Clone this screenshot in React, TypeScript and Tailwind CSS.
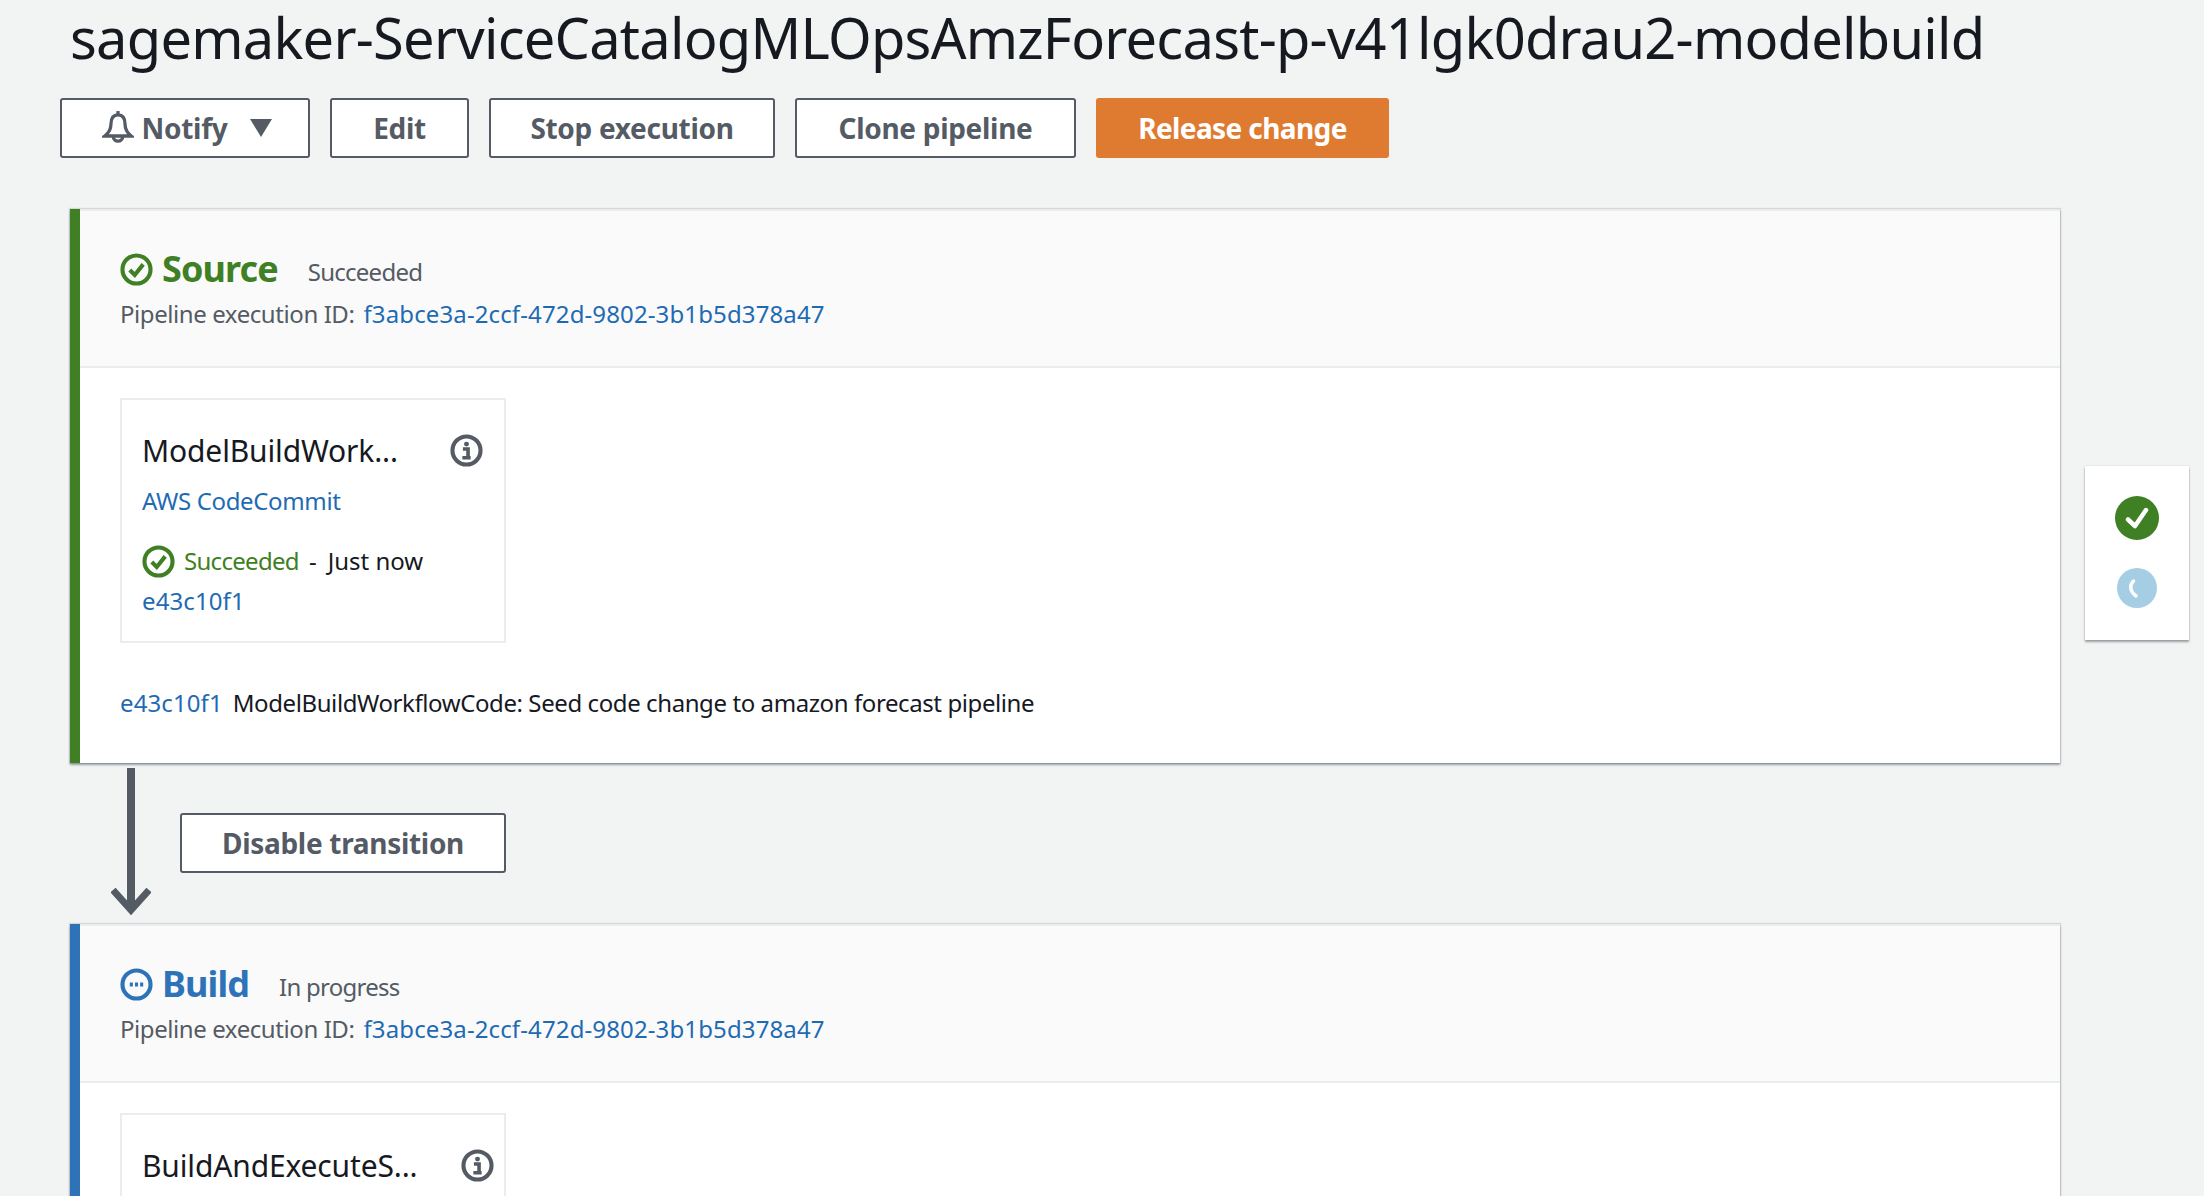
import type { ReactNode } from "react"

const EXEC_ID = "f3abce3a-2ccf-472d-9802-3b1b5d378a47"

function Btn({ children, className = "" }: { children: ReactNode; className?: string }) {
  return (
    <button className={"h-[60px] flex items-center justify-center bg-white border-2 border-[#545b64] rounded-[3px] text-[#545b64] font-bold text-[28px] tracking-[-0.3px] " + className}>
      {children}
    </button>
  )
}

function StatusIcon({ color, size = 33, kind }: { color: string; size?: number; kind: "check" | "dots" }) {
  return (
    <svg width={size} height={size} viewBox="0 0 32 32" fill="none" className="shrink-0">
      <circle cx="16" cy="16" r="13.6" stroke={color} strokeWidth="4" />
      {kind === "check" ? (
        <path d="M9.500 16.500l4.800 4.800L22.500 11" stroke={color} strokeWidth="4" />
      ) : (
        <path d="M9.500 16h3M14.500 16h3M19.500 16h3" stroke={color} strokeWidth="4" />
      )}
    </svg>
  )
}

function InfoIcon() {
  return (
    <svg width="33" height="33" viewBox="0 0 32 32" fill="none" className="shrink-0">
      <circle cx="16" cy="16" r="13.6" stroke="#545b64" strokeWidth="4" />
      <circle cx="16" cy="9.800" r="2.400" fill="#545b64" />
      <path d="M12.500 14.500h5v8M12 23h8" stroke="#545b64" strokeWidth="3.500" />
    </svg>
  )
}

function StageHeader({ name, status, color, kind }: { name: string; status: string; color: string; kind: "check" | "dots" }) {
  return (
    <div className="h-[159px] bg-[#fafafa] border-t-2 border-b-2 border-[#eaeded] pl-10 pt-[34px]">
      <div className="flex items-center h-[48px]">
        <StatusIcon color={color} kind={kind} />
        <span className="ml-[9px] text-[36px] font-bold leading-[48px] tracking-[-0.9px]" style={{ color }}>{name}</span>
        <span className="ml-[30px] text-[24px] text-[#545b64] mt-[5px] tracking-[-0.75px]">{status}</span>
      </div>
      <div className="mt-[3px] text-[24px] leading-[36px] text-[#545b64] flex">
        <span className="tracking-[-0.42px]">Pipeline execution ID:</span>
        <span className="ml-[9px] text-[#1f6bb3] tracking-[0.12px]">{EXEC_ID}</span>
      </div>
    </div>
  )
}

export default function App() {
  return (
    <div className="w-[2204px] h-[1196px] overflow-hidden bg-[#f2f3f3] font-['Noto_Sans','Open_Sans',sans-serif]">
      <h1 className="pl-[70px] pt-[1px] h-[98px] text-[56px] leading-[72px] text-[#16191f] tracking-[-0.76px]">
        sagemaker-ServiceCatalogMLOpsAmzForecast-p-v41lgk0drau2-modelbuild
      </h1>

      <div className="flex gap-5 pl-[60px]">
        <Btn className="w-[250px] pl-[4px]">
          <svg width="32" height="34" viewBox="0 0 34 36" fill="none" className="mr-[8px]">
            <path d="M17 4c-5 0-7.500 4-7.500 10 0 6-2 9-6.500 12.500h28C26.500 23 24.500 20 24.500 14c0-6-2.500-10-7.500-10z" stroke="#545b64" strokeWidth="3.500" />
            <path d="M17 0v4" stroke="#545b64" strokeWidth="3.500" />
            <path d="M12 27a5 5 0 0 0 10 0" stroke="#545b64" strokeWidth="3.500" />
          </svg>
          <span>Notify</span>
          <svg width="22" height="18" viewBox="0 0 22 18" className="ml-[23px]">
            <path d="M0 0h22L11 18z" fill="#545b64" />
          </svg>
        </Btn>
        <Btn className="w-[139px]">Edit</Btn>
        <Btn className="w-[286px]">Stop execution</Btn>
        <Btn className="w-[281px]">Clone pipeline</Btn>
        <button className="w-[293px] h-[60px] bg-[#df7b30] rounded-[3px] text-white font-bold text-[28px] tracking-[-0.6px]">Release change</button>
      </div>

      <div className="flex mt-[51px] pl-[70px]">
        <div className="w-[1990px]">
          <section className="h-[554px] bg-white border-l-[10px] border-[#3f8024] shadow-[0_2px_2px_0_rgba(84,91,100,0.55),0_0_1px_1px_rgba(84,91,100,0.18)]">
            <StageHeader name="Source" status="Succeeded" color="#3f8024" kind="check" />
            <div className="pl-10 pt-[30px]">
              <div className="w-[386px] h-[245px] border-2 border-[#eaeded] pl-[20px] pt-[28px]">
                <div className="flex items-center justify-between pr-[21px] h-[44px]">
                  <span className="text-[30px] text-[#16191f] tracking-[-0.15px]">ModelBuildWork...</span>
                  <InfoIcon />
                </div>
                <div className="mt-[9px] text-[24px] leading-[40px] text-[#1f6bb3] tracking-[-0.35px]">AWS CodeCommit</div>
                <div className="mt-[20px] flex items-center text-[24px] leading-[40px]">
                  <StatusIcon color="#3f8024" kind="check" />
                  <span className="ml-[9px] text-[#3f8024] tracking-[-0.7px]">Succeeded</span>
                  <span className="ml-[10px] text-[#16191f]">-</span>
                  <span className="ml-[11px] text-[#16191f]">Just now</span>
                </div>
                <div className="text-[24px] leading-[40px] text-[#1f6bb3] tracking-[0.1px]">e43c10f1</div>
              </div>
              <div className="mt-[42px] text-[24px] leading-[36px] flex">
                <span className="text-[#1f6bb3] tracking-[0.1px]">e43c10f1</span>
                <span className="ml-[10px] text-[#16191f] tracking-[-0.41px]">ModelBuildWorkflowCode: Seed code change to amazon forecast pipeline</span>
              </div>
            </div>
          </section>

          <div className="h-[161px] flex pl-[41px]">
            <svg width="40" height="151" viewBox="0 0 40 151" fill="none" className="shrink-0 mt-[5px]">
              <path d="M20 0v140" stroke="#545b64" strokeWidth="8" />
              <path d="M2 122l18 20 18-20" stroke="#545b64" strokeWidth="7" />
            </svg>
            <Btn className="w-[326px] ml-[29px] mt-[50px]">Disable transition</Btn>
          </div>

          <section className="h-[400px] bg-white border-l-[10px] border-[#2e73b8] shadow-[0_2px_2px_0_rgba(84,91,100,0.55),0_0_1px_1px_rgba(84,91,100,0.18)]">
            <StageHeader name="Build" status="In progress" color="#2e73b8" kind="dots" />
            <div className="pl-10 pt-[30px]">
              <div className="w-[386px] h-[245px] border-2 border-[#eaeded] pl-[20px] pt-[28px]">
                <div className="flex items-center justify-between pr-[10px] h-[44px]">
                  <span className="text-[30px] text-[#16191f] tracking-[-0.15px]">BuildAndExecuteS...</span>
                  <InfoIcon />
                </div>
              </div>
            </div>
          </section>
        </div>

        <div className="ml-[25px] mt-[257px] w-[104px] h-[174px] bg-white shadow-[0_2px_2px_0_rgba(84,91,100,0.55),0_0_1px_0_rgba(84,91,100,0.3)] flex flex-col items-center pt-[30px]">
          <svg width="44" height="44" viewBox="0 0 44 44" fill="none">
            <circle cx="22" cy="22" r="22" fill="#3f8024" />
            <path d="M13 23.500l7 6.500 11-16" stroke="#fff" strokeWidth="4.500" strokeLinecap="round" strokeLinejoin="round" />
          </svg>
          <svg width="40" height="40" viewBox="0 0 40 40" fill="none" className="mt-[28px]">
            <circle cx="20" cy="20" r="20" fill="#a5cde4" />
            <path d="M16.500 13c-4 4-4 10 2.500 15" stroke="#fff" strokeWidth="3.500" strokeLinecap="round" />
          </svg>
        </div>
      </div>
    </div>
  )
}
